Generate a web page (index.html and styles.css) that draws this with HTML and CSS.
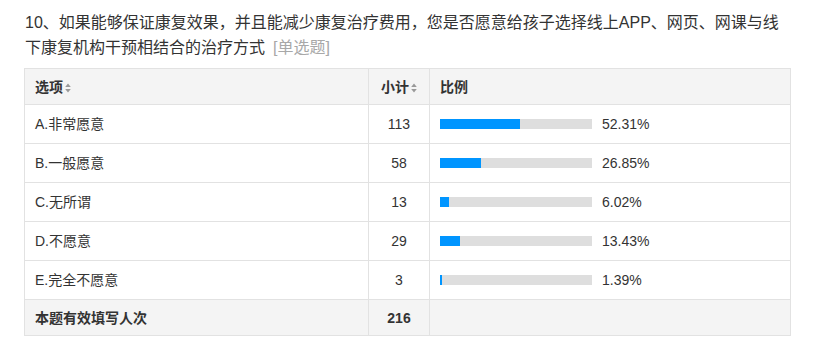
FILE: index.html
```html
<!DOCTYPE html>
<html lang="zh-CN">
<head>
<meta charset="utf-8">
<title>问卷统计</title>
<link rel="stylesheet" href="styles.css">
</head>
<body>
<div class="wrap">
  <div class="title"><span class="qtext">10、如果能够保证康复效果，并且能减少康复治疗费用，您是否愿意给孩子选择线上APP、网页、网课与线下康复机构干预相结合的治疗方式</span><span class="qtype">[单选题]</span></div>
  <table class="stats">
    <colgroup>
      <col class="c1"><col class="c2"><col class="c3">
    </colgroup>
    <thead>
      <tr>
        <th class="left">选项<svg class="sort" width="6" height="10" viewBox="0 0 6 10"><path d="M3 0.5L5.8 4H0.2Z M3 9.5L5.8 6H0.2Z" fill="#999999"/></svg></th>
        <th class="center">小计<svg class="sort" width="6" height="10" viewBox="0 0 6 10"><path d="M3 0.5L5.8 4H0.2Z M3 9.5L5.8 6H0.2Z" fill="#999999"/></svg></th>
        <th class="left">比例</th>
      </tr>
    </thead>
    <tbody>
      <tr><td class="left">A.非常愿意</td><td class="center">113</td><td class="left"><div class="ratio"><div class="bar"><div class="fill" style="width:52.31%"></div></div><span class="pct">52.31%</span></div></td></tr>
      <tr><td class="left">B.一般愿意</td><td class="center">58</td><td class="left"><div class="ratio"><div class="bar"><div class="fill" style="width:26.85%"></div></div><span class="pct">26.85%</span></div></td></tr>
      <tr><td class="left">C.无所谓</td><td class="center">13</td><td class="left"><div class="ratio"><div class="bar"><div class="fill" style="width:6.02%"></div></div><span class="pct">6.02%</span></div></td></tr>
      <tr><td class="left">D.不愿意</td><td class="center">29</td><td class="left"><div class="ratio"><div class="bar"><div class="fill" style="width:13.43%"></div></div><span class="pct">13.43%</span></div></td></tr>
      <tr><td class="left">E.完全不愿意</td><td class="center">3</td><td class="left"><div class="ratio"><div class="bar"><div class="fill" style="width:1.39%"></div></div><span class="pct">1.39%</span></div></td></tr>
    </tbody>
    <tfoot>
      <tr><td class="left">本题有效填写人次</td><td class="center">216</td><td></td></tr>
    </tfoot>
  </table>
</div>
</body>
</html>
```
FILE: styles.css
```css
html, body {
  margin: 0;
  padding: 0;
  background: #ffffff;
}
body {
  font-family: "Liberation Sans", Arial, "Noto Sans CJK SC", sans-serif;
  color: #333333;
}
.wrap {
  width: 766px;
  padding: 10px 0 0 24px;
}
.title {
  font-size: 16px;
  line-height: 25px;
  color: #333333;
  padding-left: 1px;
  margin-bottom: 8px;
}
.qtype {
  color: #a8a8a8;
  margin-left: 8px;
}
.stats {
  width: 766px;
  border-collapse: collapse;
  font-size: 14px;
  table-layout: fixed;
}
.c1 { width: 344px; }
.c2 { width: 61px; }
.c3 { width: 361px; }
.stats th, .stats td {
  border: 1px solid #e2e2e2;
  padding: 0 10px;
  line-height: 18px;
}
.stats thead th {
  background: #f4f4f4;
  height: 35px;
  font-weight: bold;
  color: #333333;
}
.stats tbody td {
  height: 38px;
  color: #333333;
}
.stats tfoot td {
  background: #f4f4f4;
  height: 35px;
  font-weight: bold;
}
.left { text-align: left; }
.center { text-align: center; }
.sort {
  margin-left: 2px;
  vertical-align: -1px;
}
.ratio {
  display: flex;
  align-items: center;
}
.bar {
  width: 152px;
  height: 10px;
  background: #dedede;
  flex: none;
}
.fill {
  height: 100%;
  background: #0095ff;
}
.pct {
  margin-left: 10px;
}
```
